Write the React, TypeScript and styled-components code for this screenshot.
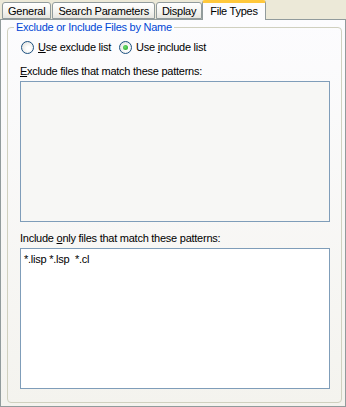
import React from "react";
import styled, { createGlobalStyle } from "styled-components";

const GlobalStyle = createGlobalStyle`
  html, body {
    margin: 0;
    padding: 0;
    background: #ece9d8;
  }
  body {
    font-family: "Liberation Sans", Arial, sans-serif;
    font-size: 11px;
    letter-spacing: -0.25px;
    color: #000;
  }
`;

const tabs = ["General", "Search Parameters", "Display", "File Types"];

export default function App() {
  const [active, setActive] = React.useState(3);
  const [mode, setMode] = React.useState<"exclude" | "include">("include");

  return (
    <Window>
      <GlobalStyle />
      <TabStrip>
        {tabs.map((t, i) => (
          <Tab key={t} $active={i === active} onClick={() => setActive(i)}>
            {t}
          </Tab>
        ))}
      </TabStrip>
      <Page>
        <GroupBox>
          <Legend>Exclude or Include Files by Name</Legend>
          <RadioRow>
            <RadioLabel onClick={() => setMode("exclude")}>
              <RadioCircle $checked={mode === "exclude"} />
              <span>
                <u>U</u>se exclude list
              </span>
            </RadioLabel>
            <RadioLabel onClick={() => setMode("include")}>
              <RadioCircle $checked={mode === "include"} />
              <span>
                Use <u>i</u>nclude list
              </span>
            </RadioLabel>
          </RadioRow>
          <FieldLabel $top={11}>
            <u>E</u>xclude files that match these patterns:
          </FieldLabel>
          <PatternBox $disabled={mode !== "exclude"} />
          <FieldLabel $top={10}>
            Include <u>o</u>nly files that match these patterns:
          </FieldLabel>
          <PatternBox $disabled={mode !== "include"}>*.lisp *.lsp&nbsp; *.cl</PatternBox>
        </GroupBox>
      </Page>
    </Window>
  );
}

///////// Styled Components /////////
const Window = styled.div`
  width: 346px;
  height: 407px;
  display: flex;
  flex-direction: column;
  background: #ece9d8;
`;

const TabStrip = styled.div`
  display: flex;
  align-items: flex-end;
  height: 19px;
  flex-shrink: 0;
  padding-left: 2px;
  position: relative;
  z-index: 1;
`;

const Tab = styled.div<{ $active?: boolean }>`
  box-sizing: border-box;
  height: ${(p) => (p.$active ? "20px" : "17px")};
  margin-bottom: ${(p) => (p.$active ? "-1px" : "0")};
  margin-left: ${(p) => (p.$active ? "-1px" : "0")};
  margin-right: ${(p) => (p.$active ? "-1px" : "1px")};
  padding: ${(p) => (p.$active ? "2px 7px 0 7px" : "2px 5px 0 5px")};
  border: 1px solid #919b9c;
  border-bottom: ${(p) => (p.$active ? "none" : "1px solid #919b9c")};
  border-top: ${(p) => (p.$active ? "3px solid #ffc83c" : "1px solid #919b9c")};
  border-radius: 3px 3px 0 0;
  background: ${(p) =>
    p.$active ? "#fcfcfe" : "linear-gradient(#ffffff, #f3f3ef 60%, #e6e5df)"};
  white-space: nowrap;
  cursor: default;
  line-height: 13px;
`;

const Page = styled.div`
  box-sizing: border-box;
  height: 388px;
  width: 346px;
  flex-shrink: 0;
  border: 1px solid #919b9c;
  background: linear-gradient(#fcfcfe, #f4f3ee);
  padding: 1px 3px 3px 6px;
  display: flex;
`;

const GroupBox = styled.fieldset`
  flex: 1;
  margin: 0;
  border: 1px solid #d0d0bf;
  border-radius: 4px;
  padding: 0 11px 13px 12px;
  display: flex;
  flex-direction: column;
  min-width: 0;
`;

const Legend = styled.legend`
  color: #0046d5;
  padding: 0 2px;
  margin-left: -6px;
  line-height: 13px;
`;

const RadioRow = styled.div`
  display: flex;
  gap: 8px;
  margin-top: 7px;
  margin-left: 1px;
`;

const RadioLabel = styled.label`
  display: flex;
  align-items: center;
  gap: 4px;
  cursor: default;
  line-height: 13px;
`;

const RadioCircle = styled.span<{ $checked?: boolean }>`
  box-sizing: border-box;
  width: 13px;
  height: 13px;
  border-radius: 50%;
  border: 1px solid #1c5180;
  background: radial-gradient(circle at 60% 60%, #ffffff 20%, #dcdcd7 100%);
  display: flex;
  align-items: center;
  justify-content: center;
  &::after {
    content: "";
    display: ${(p) => (p.$checked ? "block" : "none")};
    width: 5px;
    height: 5px;
    border-radius: 50%;
    background: radial-gradient(circle at 40% 40%, #6fdd6f, #21a121);
  }
`;

const FieldLabel = styled.div<{ $top?: number }>`
  margin-top: ${(p) => p.$top ?? 12}px;
  margin-bottom: 3px;
  line-height: 13px;
`;

const PatternBox = styled.div<{ $disabled?: boolean }>`
  box-sizing: border-box;
  height: 141px;
  width: 310px;
  flex-shrink: 0;
  border: 1px solid #7f9db9;
  background: ${(p) => (p.$disabled ? "#f7f7f5" : "#ffffff")};
  padding: 4px 3px;
  line-height: 13px;
  white-space: pre;
`;
